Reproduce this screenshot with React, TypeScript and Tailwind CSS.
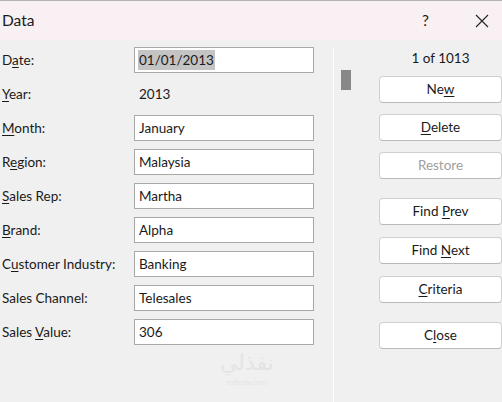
import React from 'react';

const font = { fontFamily: 'Lato, "Noto Sans", "DejaVu Sans", sans-serif' };

type Field = { label: React.ReactNode; value?: string; plain?: boolean; selected?: boolean };

const U = ({ children }: { children: React.ReactNode }) => <span className="underline underline-offset-2">{children}</span>;

const fields: Field[] = [
  { label: <>D<U>a</U>te:</>, value: '01/01/2013', selected: true },
  { label: <><U>Y</U>ear:</>, value: '2013', plain: true },
  { label: <><U>M</U>onth:</>, value: 'January' },
  { label: <>R<U>e</U>gion:</>, value: 'Malaysia' },
  { label: <><U>S</U>ales Rep:</>, value: 'Martha' },
  { label: <><U>B</U>rand:</>, value: 'Alpha' },
  { label: <>C<U>u</U>stomer Industry:</>, value: 'Banking' },
  { label: <>Sales Channel:</>, value: 'Telesales' },
  { label: <>Sales <U>V</U>alue:</>, value: '306' },
];

function Btn({ children, disabled, className = '' }: { children: React.ReactNode; disabled?: boolean; className?: string }) {
  return (
    <button
      className={`h-[27px] w-[123px] rounded-[4px] border border-[#d0d0d0] border-b-[#b8b8b8] bg-white text-[13.5px] ${
        disabled ? 'text-[#a0a0a0]' : 'text-[#1a1a1a]'
      } ${className}`}
    >
      {children}
    </button>
  );
}

export default function App() {
  return (
    <div className="relative h-[402px] w-[502px] overflow-hidden bg-[#f0f0f0] text-[#1a1a1a]" style={font}>
      {/* Title bar */}
      <div className="flex h-[40px] items-center border-t border-[#b4b4b4] bg-[#f9f0f3]">
        <span className="pl-[2px] text-[15.5px]">Data</span>
        <span className="ml-auto mr-[46px] text-[15.5px]">?</span>
        <svg className="mr-[13px]" width="14" height="14" viewBox="0 0 14 14">
          <path d="M1 1 L13 13 M13 1 L1 13" stroke="#222" strokeWidth="1.1" fill="none" />
        </svg>
      </div>

      <div className="flex">
        {/* Fields */}
        <div className="w-[333px] pt-[7px]">
          {fields.map((f, i) => (
            <div key={i} className="flex h-[34px] items-start">
              <div className="flex h-[26px] w-[134px] items-center pl-[2px] text-[13.5px]">
                <span>{f.label}</span>
              </div>
              {f.plain ? (
                <div className="flex h-[26px] items-center pl-[5px] text-[13.5px]">{f.value}</div>
              ) : (
                <div className="flex h-[26px] w-[180px] items-center border border-[#a8a8a8] bg-white px-[3px] text-[13.5px]">
                  <span className={f.selected ? 'bg-[#c4c4c4] px-[1px]' : 'px-[1px]'}>{f.value}</span>
                </div>
              )}
            </div>
          ))}
        </div>

        {/* Scroll + buttons */}
        <div className="mt-[8px] flex h-[360px] border-l border-white">
          <div className="w-[45px]">
            <div className="ml-[7px] mt-[22px] h-[20px] w-[10px] bg-[#888888]" />
          </div>
          <div className="flex w-[123px] flex-col">
            <div className="flex h-[20px] items-center justify-center text-[13.5px]">1 of 1013</div>
            <Btn className="mt-[8px]">Ne<U>w</U></Btn>
            <Btn className="mt-[11px]"><U>D</U>elete</Btn>
            <Btn className="mt-[11px]" disabled>Restore</Btn>
            <Btn className="mt-[19px]">Find <U>P</U>rev</Btn>
            <Btn className="mt-[12px]">Find <U>N</U>ext</Btn>
            <Btn className="mt-[12px]"><U>C</U>riteria</Btn>
            <Btn className="mt-[19px]">C<U>l</U>ose</Btn>
          </div>
        </div>
      </div>

      {/* watermark */}
      <div className="absolute left-[220px] top-[352px] flex flex-col items-center gap-[4px] leading-none text-[#e4e4e4]">
        <span className="text-[22px]" style={{ fontFamily: '"DejaVu Sans", sans-serif' }}>نفذلي</span>
        <span className="text-[8px]">nafezly.com</span>
      </div>
    </div>
  );
}
